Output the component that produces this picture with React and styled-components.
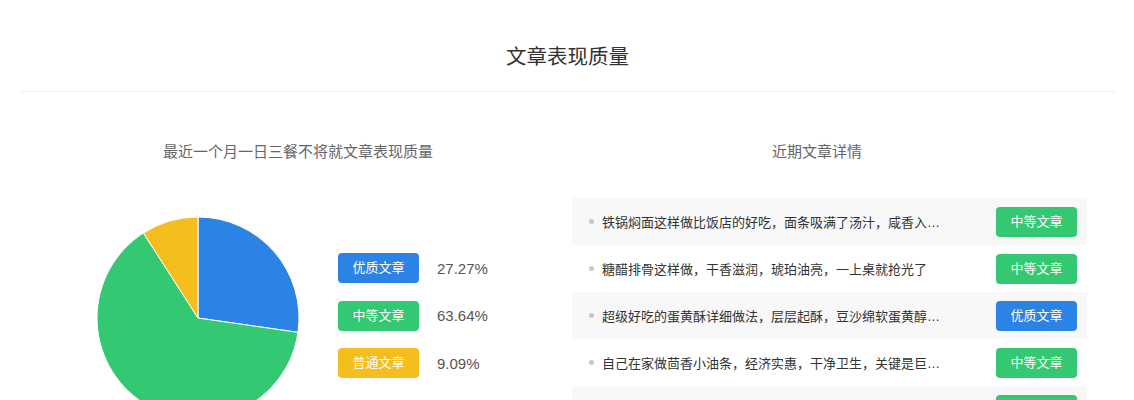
import styled, { createGlobalStyle } from 'styled-components';

const GlobalStyle = createGlobalStyle`
    body {
        margin: 0;
        background: #fff;
        font-family: "Liberation Sans", "Noto Sans CJK SC", sans-serif;
        color: #333;
    }
`;

const COLORS = {
    good: '#2c83e6',
    mid: '#35c872',
    normal: '#f4be1f',
};

const Page = styled.div`
    padding: 0 19px 0 20px;
`;

const Header = styled.div`
    height: 91px;
    border-bottom: 1px solid #f0f0f0;
    display: flex;
    justify-content: center;
    align-items: flex-start;
`;

const Title = styled.h1`
    margin: 44px 0 0;
    font-size: 20.5px;
    line-height: 26px;
    font-weight: normal;
    color: #333;
`;

const Columns = styled.div`
    display: grid;
    grid-template-columns: 547px 1fr;
`;

const Column = styled.div`
    padding-top: 50px;
`;

const SubTitle = styled.h2`
    margin: 0;
    font-size: 15px;
    line-height: 20px;
    font-weight: normal;
    color: #666;
    text-align: center;
    padding-left: ${p => p.$left || 0}px;
    padding-right: ${p => p.$right || 0}px;
`;

const ChartArea = styled.div`
    display: flex;
    align-items: flex-start;
    padding: 55px 0 0 77px;
    gap: 39px;
`;

const Legend = styled.div`
    display: flex;
    flex-direction: column;
    gap: 17.5px;
    margin-top: 36px;
`;

const LegendRow = styled.div`
    display: flex;
    align-items: center;
    gap: 18px;
`;

const Badge = styled.span`
    display: inline-block;
    flex-shrink: 0;
    width: 81px;
    height: 30px;
    line-height: 30px;
    border-radius: 4px;
    text-align: center;
    font-size: 13px;
    color: #fff;
    background: ${p => COLORS[p.$kind]};
`;

const Percent = styled.span`
    font-size: 15px;
    color: #555;
`;

const List = styled.ul`
    list-style: none;
    margin: 36px 28px 0 5px;
    padding: 0;
`;

const Row = styled.li`
    height: 47px;
    display: flex;
    align-items: center;
    padding: 0 10px 0 17px;
    background: ${p => (p.$odd ? '#f8f8f8' : '#fff')};
`;

const Dot = styled.span`
    width: 5px;
    height: 5px;
    border-radius: 50%;
    background: #c8c8c8;
    flex-shrink: 0;
    margin-right: 8px;
`;

const ArticleTitle = styled.span`
    font-size: 13px;
    color: #333;
    max-width: 345px;
    white-space: nowrap;
    overflow: hidden;
    text-overflow: ellipsis;
`;

const RowBadge = styled(Badge)`
    margin-left: auto;
`;

const LABELS = {
    good: '优质文章',
    mid: '中等文章',
    normal: '普通文章',
};

const stats = [
    { kind: 'good', value: 27.27 },
    { kind: 'mid', value: 63.64 },
    { kind: 'normal', value: 9.09 },
];

const articles = [
    { title: '铁锅焖面这样做比饭店的好吃，面条吸满了汤汁，咸香入味，一锅不够吃', kind: 'mid' },
    { title: '糖醋排骨这样做，干香滋润，琥珀油亮，一上桌就抢光了', kind: 'mid' },
    { title: '超级好吃的蛋黄酥详细做法，层层起酥，豆沙绵软蛋黄醇香，一口一个停不下来', kind: 'good' },
    { title: '自己在家做茴香小油条，经济实惠，干净卫生，关键是巨好吃', kind: 'mid' },
    { title: '家常红烧肉这样做，肥而不腻，入口即化，米饭都不够吃', kind: 'mid' },
];

function Pie({ data, r = 101 }) {
    const c = r;
    let start = 0;
    const point = a => {
        const rad = (a * Math.PI) / 180;
        return `${(c + r * Math.sin(rad)).toFixed(2)} ${(c - r * Math.cos(rad)).toFixed(2)}`;
    };
    return (
        <svg width={r * 2} height={r * 2} viewBox={`0 0 ${r * 2} ${r * 2}`}>
            {data.map(d => {
                const sweep = (d.value / 100) * 360;
                const end = start + sweep;
                const large = sweep > 180 ? 1 : 0;
                const path = `M ${c} ${c} L ${point(start)} A ${r} ${r} 0 ${large} 1 ${point(end)} Z`;
                start = end;
                return <path key={d.kind} d={path} fill={COLORS[d.kind]} stroke="#fff" strokeWidth="1" />;
            })}
        </svg>
    );
}

export default function App() {
    return (
        <>
            <GlobalStyle />
            <Page>
                <Header>
                    <Title>文章表现质量</Title>
                </Header>
                <Columns>
                    <Column>
                        <SubTitle $left={9}>最近一个月一日三餐不将就文章表现质量</SubTitle>
                        <ChartArea>
                            <Pie data={stats} />
                            <Legend>
                                {stats.map(s => (
                                    <LegendRow key={s.kind}>
                                        <Badge $kind={s.kind}>{LABELS[s.kind]}</Badge>
                                        <Percent>{s.value.toFixed(2)}%</Percent>
                                    </LegendRow>
                                ))}
                            </Legend>
                        </ChartArea>
                    </Column>
                    <Column>
                        <SubTitle $right={48}>近期文章详情</SubTitle>
                        <List>
                            {articles.map((a, i) => (
                                <Row key={i} $odd={i % 2 === 0}>
                                    <Dot />
                                    <ArticleTitle>{a.title}</ArticleTitle>
                                    <RowBadge $kind={a.kind}>{LABELS[a.kind]}</RowBadge>
                                </Row>
                            ))}
                        </List>
                    </Column>
                </Columns>
            </Page>
        </>
    );
}
